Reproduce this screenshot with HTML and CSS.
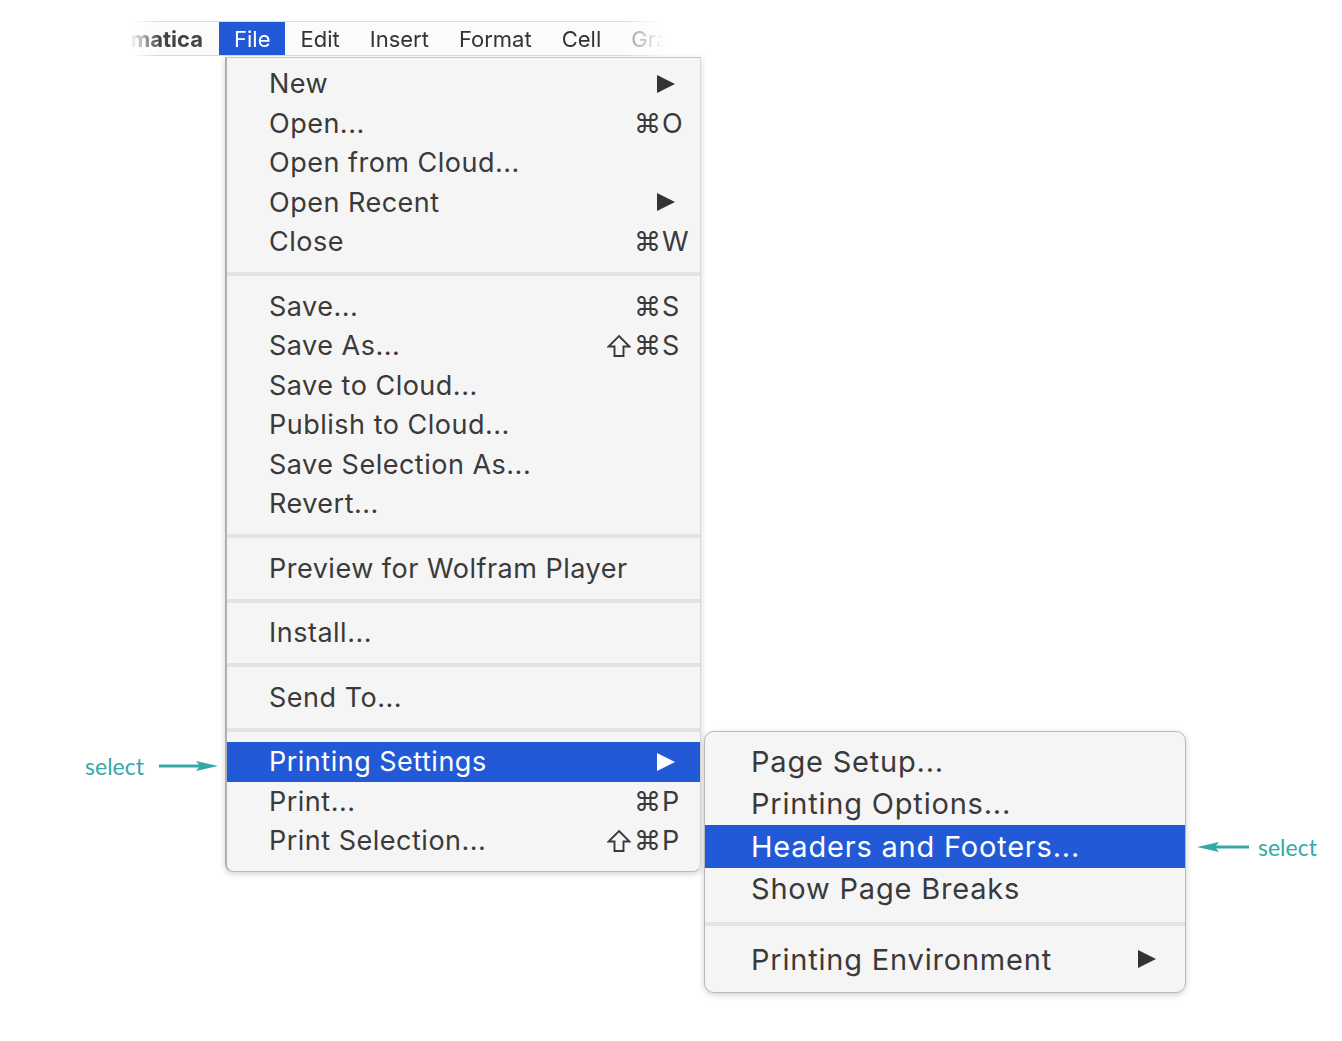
FILE: index.html
```html
<!DOCTYPE html>
<html>
<head>
<meta charset="utf-8">
<link rel="stylesheet" href="styles.css">
</head>
<body>
<div class="canvas">
  <div class="menubar">
    <div class="app"><span>Mathematica</span></div>
    <div class="mb-item active">File</div>
    <div class="mb-item">Edit</div>
    <div class="mb-item">Insert</div>
    <div class="mb-item">Format</div>
    <div class="mb-item">Cell</div>
    <div class="mb-item faded">Graphics</div>
  </div>

  <div class="menu file-menu">
    <div class="group">
      <div class="row"><span class="label">New</span><span class="sc"><svg class="tri" viewBox="0 0 20 20"><path d="M1 1 L19 10 L1 19 Z"/></svg></span></div>
      <div class="row"><span class="label">Open...</span><span class="sc"><span class="shift"></span><span class="cmd">⌘O</span></span></div>
      <div class="row"><span class="label">Open from Cloud...</span></div>
      <div class="row"><span class="label">Open Recent</span><span class="sc"><svg class="tri" viewBox="0 0 20 20"><path d="M1 1 L19 10 L1 19 Z"/></svg></span></div>
      <div class="row"><span class="label">Close</span><span class="sc"><span class="shift"></span><span class="cmd">⌘W</span></span></div>
    </div>
    <div class="sep"></div>
    <div class="group">
      <div class="row"><span class="label">Save...</span><span class="sc"><span class="shift"></span><span class="cmd">⌘S</span></span></div>
      <div class="row"><span class="label">Save As...</span><span class="sc"><span class="shift"><svg class="shift-icon" viewBox="0 0 24 24"><path d="M12 2 L22.5 12.5 L16.5 12.5 L16.5 22 L7.5 22 L7.5 12.5 L1.5 12.5 Z"/></svg></span><span class="cmd">⌘S</span></span></div>
      <div class="row"><span class="label">Save to Cloud...</span></div>
      <div class="row"><span class="label">Publish to Cloud...</span></div>
      <div class="row"><span class="label">Save Selection As...</span></div>
      <div class="row"><span class="label">Revert...</span></div>
    </div>
    <div class="sep"></div>
    <div class="group">
      <div class="row"><span class="label">Preview for Wolfram Player</span></div>
    </div>
    <div class="sep"></div>
    <div class="group">
      <div class="row"><span class="label">Install...</span></div>
    </div>
    <div class="sep"></div>
    <div class="group">
      <div class="row"><span class="label">Send To...</span></div>
    </div>
    <div class="sep"></div>
    <div class="group">
      <div class="row selected has-sub">
        <span class="label">Printing Settings</span><span class="sc"><svg class="tri" viewBox="0 0 20 20"><path d="M1 1 L19 10 L1 19 Z"/></svg></span>
        <div class="callout callout-left">
          <span class="callout-text">select</span>
          <svg class="callout-arrow" viewBox="0 0 60 12"><path d="M0 6 H44" /><path class="head" d="M37 1 L59 6 L37 11 L41 6 Z"/></svg>
        </div>
        <div class="menu submenu">
          <div class="group">
            <div class="srow"><span class="label">Page Setup...</span></div>
            <div class="srow"><span class="label">Printing Options...</span></div>
            <div class="srow selected">
              <span class="label">Headers and Footers...</span>
              <div class="callout callout-right">
                <svg class="callout-arrow" viewBox="0 0 52 12"><path d="M10 6 H52" /><path class="head" d="M22 1 L0 6 L22 11 L18 6 Z"/></svg>
                <span class="callout-text">select</span>
              </div>
            </div>
            <div class="srow"><span class="label">Show Page Breaks</span></div>
          </div>
          <div class="sep ssep"></div>
          <div class="group">
            <div class="srow"><span class="label">Printing Environment</span><span class="ssc"><svg class="tri" viewBox="0 0 20 20"><path d="M1 1 L19 10 L1 19 Z"/></svg></span></div>
          </div>
        </div>
      </div>
      <div class="row"><span class="label">Print...</span><span class="sc"><span class="shift"></span><span class="cmd">⌘P</span></span></div>
      <div class="row"><span class="label">Print Selection...</span><span class="sc"><span class="shift"><svg class="shift-icon" viewBox="0 0 24 24"><path d="M12 2 L22.5 12.5 L16.5 12.5 L16.5 22 L7.5 22 L7.5 12.5 L1.5 12.5 Z"/></svg></span><span class="cmd">⌘P</span></span></div>
    </div>
  </div>
</div>
</body>
</html>
```

FILE: styles.css
```css
* { box-sizing: border-box; }
html, body { margin: 0; padding: 0; background: #ffffff; }
body { width: 1342px; height: 1041px; overflow: hidden; font-family: Inter, "Liberation Sans", sans-serif; color: #3a3a3a; }

.canvas { position: relative; padding-top: 21px; }

.menubar {
  margin-left: 130px;
  width: 535px;
  height: 35px;
  display: flex;
  align-items: stretch;
  background: #fbfbfb;
  border-top: 1px solid #dcdcdc;
  border-bottom: 1px solid #d6d6d6;
  font-size: 22px;
  overflow: hidden;
  -webkit-mask-image: linear-gradient(to right, transparent 0px, #000 30px, #000 490px, transparent 535px);
  mask-image: linear-gradient(to right, transparent 0px, #000 30px, #000 490px, transparent 535px);
}
.app {
  flex: 0 0 89px;
  display: flex;
  justify-content: flex-end;
  align-items: center;
  overflow: hidden;
  padding-right: 16px;
  font-weight: 700;
  color: #444;
  white-space: nowrap;
}
.app span { flex-shrink: 0; }
.mb-item { flex-shrink: 0; display: flex; align-items: center; padding: 0 15px; white-space: nowrap; color: #333; }
.mb-item.active { background: #2259d6; color: #fff; }
.mb-item.faded { color: #888; }

.menu {
  background: #f5f5f5;
  border: 1px solid #b9b9b9;
  box-shadow: 0 2px 6px rgba(0,0,0,0.18);
}
.file-menu {
  margin-left: 225px;
  margin-top: 1px;
  width: 476px;
  padding: 6px 0 10px;
  border-left: 2px solid #b0b0b0;
  border-top-color: #c8c8c8;
  border-right-color: #dadada;
  border-radius: 0 0 8px 8px;
  font-size: 27px;
  letter-spacing: 0.5px;
}
.row {
  position: relative;
  height: 39.5px;
  display: flex;
  align-items: center;
  padding-left: 42px;
  white-space: nowrap;
}
.row .label { flex: 1; }
.sc { width: 95px; display: flex; align-items: center; }
.shift { width: 29px; height: 24px; display: flex; justify-content: flex-end; align-items: center; }
.shift-icon { width: 24px; height: 24px; margin-right: 3px; }
.shift-icon path { fill: none; stroke: #3a3a3a; stroke-width: 1.9; stroke-linejoin: miter; }
.cmd { padding-left: 0; letter-spacing: 1px; }
.tri { width: 20px; height: 20px; margin-left: 51px; fill: #333; }
.selected { background: #2259d6; color: #fff; }
.selected .tri { fill: #fff; }

.sep { height: 25px; display: flex; align-items: center; }
.sep::before { content: ""; display: block; width: 100%; height: 4px; background: #e3e3e3; }

.submenu {
  position: absolute;
  left: calc(100% + 4px);
  top: -11.5px;
  width: 482px;
  padding: 8.5px 0 11px;
  border-radius: 10px;
  font-size: 29px;
  letter-spacing: 0.8px;
  color: #3a3a3a;
}
.srow {
  position: relative;
  height: 42.5px;
  display: flex;
  align-items: center;
  padding-left: 46px;
  white-space: nowrap;
}
.srow .label { flex: 1; }
.srow.selected { color: #fff; }
.ssep { height: 28px; }
.ssep::before { height: 4px; background: #e4e4e4; }
.ssc { width: 48px; display: flex; align-items: center; }
.ssc .tri { margin-left: 0; fill: #333; }

.callout { position: absolute; display: flex; align-items: center; color: #35a8a8; font-family: Lato, "Liberation Sans", sans-serif; font-size: 23px; letter-spacing: 0; }
.callout-arrow { width: 60px; height: 12px; }
.callout-arrow path { stroke: #35a8a8; stroke-width: 3; fill: none; }
.callout-arrow path.head { fill: #35a8a8; stroke: none; }
.callout-left { right: calc(100% + 8px); top: 50%; margin-top: -10px; gap: 15px; }
.callout-right { left: calc(100% + 12px); top: 50%; margin-top: -13px; gap: 9px; }
.callout-right .callout-arrow { width: 52px; }
```
